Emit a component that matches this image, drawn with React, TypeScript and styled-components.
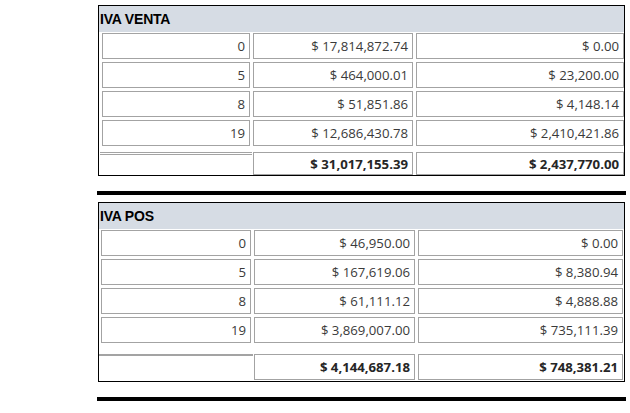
import React from "react";
import styled, { createGlobalStyle } from "styled-components";

const Global = createGlobalStyle`
  html, body { margin: 0; padding: 0; background: #ffffff; }
  body { font-family: "Open Sans", "Liberation Sans", sans-serif; }
  * { box-sizing: border-box; }
`;

const Page = styled.div`
  width: 630px;
  height: 413px;
  padding: 5px 0 0 97px;
  display: flex;
  flex-direction: column;
  overflow: hidden;
`;

const Card = styled.section`
  width: 527px;
  margin-left: 1px;
  border: 1px solid #000;
  display: flex;
  flex-direction: column;
`;

const Header = styled.div`
  height: 26px;
  line-height: 26px;
  background: #d6dce4;
  padding-left: 1px;
  font-family: "Liberation Sans", Arial, sans-serif;
  font-weight: bold;
  font-size: 14px;
  letter-spacing: -0.2px;
  color: #000;
`;

const Body = styled.div<{ $pl: number; $pb: number }>`
  display: flex;
  flex-direction: column;
  padding: 1px 0 ${(p) => p.$pb}px ${(p) => p.$pl}px;
`;

const Grid = styled.div<{ $cols: string }>`
  display: grid;
  grid-template-columns: ${(p) => p.$cols};
  column-gap: 3px;
  row-gap: 3px;
`;

const Cell = styled.div<{ $bold?: boolean; $h?: number }>`
  height: ${(p) => p.$h ?? 26}px;
  border: 1px solid #a3a3a3;
  padding-right: 4px;
  display: flex;
  align-items: center;
  justify-content: flex-end;
  font-size: 13.2px;
  font-weight: ${(p) => (p.$bold ? 700 : 400)};
  color: ${(p) => (p.$bold ? "#262626" : "#3a3a3a")};
  white-space: nowrap;
`;

const TotalRow = styled(Grid)<{ $gap: number }>`
  margin-top: ${(p) => p.$gap}px;
  align-items: end;
`;

const Blank = styled.div<{ $line: string }>`
  align-self: stretch;
  border-top: ${(p) => p.$line};
  margin: 0 -2px 0 -2px;
`;

const Bar = styled.div<{ $mt: number; $mb?: number }>`
  width: 529px;
  height: 4px;
  background: #000;
  margin-top: ${(p) => p.$mt}px;
  margin-bottom: ${(p) => p.$mb ?? 0}px;
`;

type Row = [string, string, string];

interface TableProps {
  title: string;
  rows: Row[];
  totals: [string, string];
  cols: string;
  padLeft: number;
  padBottom: number;
  totalGap: number;
  totalHeight: number;
  line: string;
}

const IvaTable: React.FC<TableProps> = ({
  title,
  rows,
  totals,
  cols,
  padLeft,
  padBottom,
  totalGap,
  totalHeight,
  line,
}) => (
  <Card>
    <Header>{title}</Header>
    <Body $pl={padLeft} $pb={padBottom}>
      <Grid $cols={cols}>
        {rows.map((r) => (
          <React.Fragment key={r[0]}>
            <Cell>{r[0]}</Cell>
            <Cell>{r[1]}</Cell>
            <Cell>{r[2]}</Cell>
          </React.Fragment>
        ))}
      </Grid>
      <TotalRow $cols={cols} $gap={totalGap}>
        <Blank $line={line} />
        <Cell $bold $h={totalHeight}>{totals[0]}</Cell>
        <Cell $bold $h={totalHeight}>{totals[1]}</Cell>
      </TotalRow>
    </Body>
  </Card>
);

const venta: Row[] = [
  ["0", "$ 17,814,872.74", "$ 0.00"],
  ["5", "$ 464,000.01", "$ 23,200.00"],
  ["8", "$ 51,851.86", "$ 4,148.14"],
  ["19", "$ 12,686,430.78", "$ 2,410,421.86"],
];

const pos: Row[] = [
  ["0", "$ 46,950.00", "$ 0.00"],
  ["5", "$ 167,619.06", "$ 8,380.94"],
  ["8", "$ 61,111.12", "$ 4,888.88"],
  ["19", "$ 3,869,007.00", "$ 735,111.39"],
];

export default function App() {
  return (
    <>
      <Global />
      <Page>
        <IvaTable
          title="IVA VENTA"
          rows={venta}
          totals={["$ 31,017,155.39", "$ 2,437,770.00"]}
          cols="148px 160px 208px"
          padLeft={3}
          padBottom={0}
          totalGap={6}
          totalHeight={23}
          line="3px double #a3a3a3"
        />
        <Bar $mt={15} $mb={7} />
        <IvaTable
          title="IVA POS"
          rows={pos}
          totals={["$ 4,144,687.18", "$ 748,381.21"]}
          cols="150px 161px 205px"
          padLeft={2}
          padBottom={1}
          totalGap={11}
          totalHeight={26}
          line="2px solid #a3a3a3"
        />
        <Bar $mt={15} />
      </Page>
    </>
  );
}
